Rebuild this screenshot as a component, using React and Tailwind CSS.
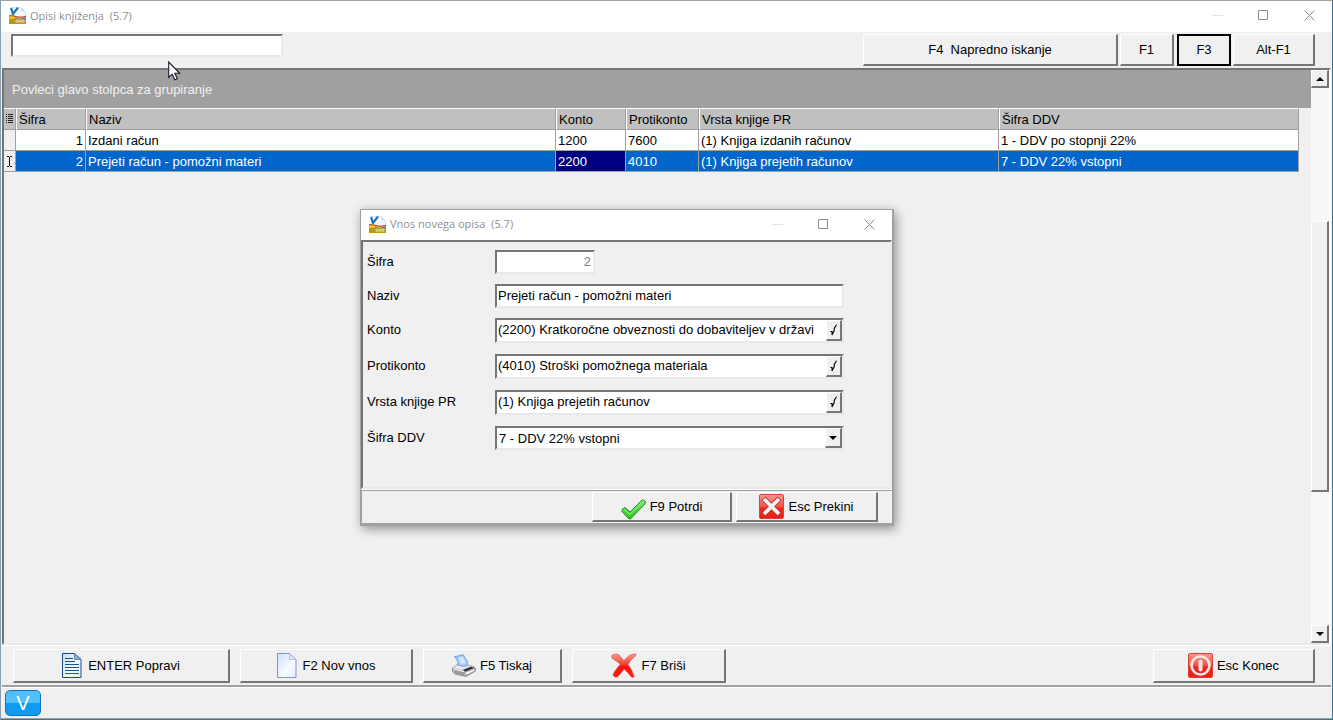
import React from "react";

const raised =
  "border border-r-2 border-b-2 border-t-white border-l-white border-r-[#767676] border-b-[#767676] bg-[#f0f0f0]";
const sunken =
  "border-2 border-t-[#757575] border-l-[#757575] border-r-[#e9e9e9] border-b-[#e9e9e9] bg-white";

function AppIcon() {
  return (
    <svg width="17" height="17" viewBox="0 0 17 17" aria-hidden="true">
      <path d="M3 0.5h9l4.500 4v9H3z" fill="#f4f7fb" stroke="#c9d3de" strokeWidth="0.6" />
      <path d="M12 0.500v4h4.500z" fill="#d4dce6" />
      <path d="M2 0.800L4 7L9 0.500" fill="none" stroke="#1778b8" strokeWidth="2.200" />
      <path d="M0 8C5 6.500 8 11.500 17 9V17H0z" fill="#f2c230" />
      <path d="M0 9C5 7.500 8 12 17 9.300" fill="none" stroke="#b33a55" strokeWidth="1" />
      <path d="M6 10.500C9 12.500 12 12 17 10.300V12H6z" fill="#3d78bb" />
      <path d="M0 12C5 11 9 12.500 17 12V17H0z" fill="#b59a12" />
      <path d="M7 13.200h2v2h-2zM10 13.200h2v2h-2zM13 13.200h2v2h-2z" fill="none" stroke="#f7f0c0" strokeWidth="0.7" />
    </svg>
  );
}

function WindowControls({ label }) {
  const base = "flex h-6 w-[46px] items-center justify-center text-[#8d8d8d]";
  return (
    <div className="flex shrink-0">
      <button type="button" aria-label={"Minimize " + label} className={base}>
        <svg width="11" height="11" viewBox="0 0 11 11"><path d="M0 5.500h11" stroke="#e2e2e2" /></svg>
      </button>
      <button type="button" aria-label={"Maximize " + label} className={base}>
        <svg width="11" height="11" viewBox="0 0 11 11"><path d="M0.500 0.500h9v9h-9z" fill="none" stroke="currentColor" /></svg>
      </button>
      <button type="button" aria-label={"Close " + label} className={base}>
        <svg width="11" height="11" viewBox="0 0 11 11"><path d="M0.500 0.500l10 10M10.500 0.500l-10 10" fill="none" stroke="currentColor" /></svg>
      </button>
    </div>
  );
}

function TitleBar({ title, className }) {
  return (
    <header className={"flex shrink-0 items-center bg-white pb-0.5 pl-2 " + className}>
      <AppIcon />
      <h2 className="ml-1 flex-1 whitespace-pre font-['Open_Sans','Noto_Sans',sans-serif] text-[11px] text-[#8f8f8f]">{title}</h2>
      <WindowControls label={title} />
    </header>
  );
}

function SheetIcon({ lined }) {
  return (
    <svg width="20" height="25" viewBox="0 0 20 25" aria-hidden="true">
      <defs>
        <linearGradient id={lined ? "sheetA" : "sheetB"} x1="0" y1="0" x2="1" y2="1">
          <stop offset="0" stopColor={lined ? "#c3dcf2" : "#cfdefa"} />
          <stop offset="0.600" stopColor="#f8fbff" />
          <stop offset="1" stopColor={lined ? "#dcebf8" : "#e2ebff"} />
        </linearGradient>
      </defs>
      <path
        d="M0.500 0.500H12.500L19 6.500V24.500H0.500z"
        fill={lined ? "url(#sheetA)" : "url(#sheetB)"}
        stroke={lined ? "#1d4a78" : "#8194c8"}
      />
      <path d="M12.500 0.700V6.500H19z" fill={lined ? "#8fb2d2" : "#dce6fb"} stroke={lined ? "#4a7098" : "#a3b3dc"} strokeWidth="0.700" />
      {lined && (
        <path d="M3 5.500h8M3 8.500h10M3 11.500h14M3 14.500h14M3 17.500h14M3 20.500h14" stroke="#1f518a" />
      )}
    </svg>
  );
}

function PrinterIcon() {
  return (
    <svg width="24" height="24" viewBox="0 0 24 24" aria-hidden="true">
      <path d="M0.500 14L7 9.500L21.500 12.500L23.500 14.500V17L14 22.500L3 20L0.500 17.500z" fill="#b4b4b6" stroke="#717174" strokeWidth="0.700" />
      <path d="M1 13.800L8 9.500L21.500 12.700L13 16.500z" fill="#ececee" />
      <path d="M5.500 11C7 8 4 5 2.500 2.500C6 3 8 0.500 11.500 0.800C12.500 4 16.500 6.500 15.500 11.500L12 12.500z" fill="#a6ccfb" stroke="#5f93da" strokeWidth="0.800" />
      <path d="M6.500 4C8 3.500 9 2.800 10.500 2.800C11.500 5 13.500 7 13.500 9.500L8.500 9.500C8.500 7.500 7.500 6 6.500 4z" fill="#d7e9ff" />
      <path d="M10.500 16L19 12.500L22 14L13.500 17.500z" fill="#36363a" />
      <path d="M2 15.500L12 18.200V21.500L3 19.200z" fill="#9b9b9e" />
      <path d="M12.500 18.700L22 14.800L23.300 16.700L14.500 21z" fill="#f8f8f8" stroke="#85858a" strokeWidth="0.600" />
      <path d="M1.500 15L12 17.600" stroke="#fafafa" strokeWidth="1" />
    </svg>
  );
}

function DeleteIcon() {
  return (
    <svg width="26" height="25" viewBox="0 0 26 25" aria-hidden="true">
      <defs>
        <linearGradient id="del" x1="0" y1="0" x2="0" y2="1">
          <stop offset="0" stopColor="#ff9a90" />
          <stop offset="0.400" stopColor="#f4483c" />
          <stop offset="0.550" stopColor="#fb1208" />
          <stop offset="1" stopColor="#ff2014" />
        </linearGradient>
      </defs>
      <path
        d="M1.500 2C4 0.800 7 0.800 8.500 2.500L13 8C15.500 4.500 19 1 25 1C25 2.500 24 3.500 22.500 4.500C20 6.500 18.500 9 17 11.500C19.500 15 22 19 23 24C22 24.800 20.500 24.500 19.500 23C17.500 20.500 15.500 18 13.300 16C10.500 18.500 9 22 6.500 23.800C4.500 24.600 2.500 23.500 2 22C3.500 18 6.500 14.500 9.200 11.500C7 8.500 4 7.500 1.500 5.500C0.500 4.500 0.500 2.800 1.500 2z"
        fill="url(#del)"
        stroke="#e0463d"
        strokeWidth="0.700"
      />
    </svg>
  );
}

function RedTile({ kind }) {
  return (
    <svg width="25" height="25" viewBox="0 0 25 25" aria-hidden="true">
      <defs>
        <linearGradient id={"tile-" + kind} x1="0" y1="0" x2="0" y2="1">
          <stop offset="0" stopColor="#f99a90" />
          <stop offset="0.500" stopColor="#ef5449" />
          <stop offset="0.550" stopColor="#ea2b22" />
          <stop offset="1" stopColor="#f01c14" />
        </linearGradient>
      </defs>
      <rect x="0.500" y="0.500" width="24" height="24" rx="1.500" fill={"url(#tile-" + kind + ")"} stroke="#dd4038" />
      {kind === "close" ? (
        <g>
          <path d="M4.500 4.500L20.500 20.500M20.500 4.500L4.500 20.500" stroke="#c0302a" strokeWidth="5.400" />
          <path d="M5 5L20 20M20 5L5 20" stroke="#f6f3f3" strokeWidth="3.800" />
        </g>
      ) : (
        <g fill="none" stroke="#f6e6e5">
          <circle cx="12.500" cy="12.500" r="9" strokeWidth="2.600" />
          <path d="M12.500 8.500V16.500" strokeWidth="4" strokeLinecap="round" />
        </g>
      )}
    </svg>
  );
}

function CheckIcon() {
  return (
    <svg width="25" height="22" viewBox="0 0 25 22" aria-hidden="true" className="mt-1">
      <defs>
        <linearGradient id="chk" x1="0" y1="0" x2="0" y2="1">
          <stop offset="0" stopColor="#7be86a" />
          <stop offset="1" stopColor="#22c41c" />
        </linearGradient>
      </defs>
      <path d="M1 11.500L4 9.500L9 14L21.500 1.500L24.500 3.500L24 6L9.500 21L7.500 20.500L1 13.500z" fill="url(#chk)" stroke="#269522" strokeWidth="1" strokeLinejoin="round" />
      <path d="M3 11.500L9 16.500L22.500 3" fill="none" stroke="#a8f59a" strokeWidth="1" />
    </svg>
  );
}

function CommandButton({ icon, children, className }) {
  return (
    <button type="button" className={"flex items-center justify-center whitespace-pre " + raised + " " + className}>
      {icon}
      <span>{children}</span>
    </button>
  );
}

const columns = [
  { name: "Šifra", width: "w-[70px]" },
  { name: "Naziv", width: "" },
  { name: "Konto", width: "w-[70px]" },
  { name: "Protikonto", width: "w-[73px]" },
  { name: "Vrsta knjige PR", width: "w-[300px]" },
  { name: "Šifra DDV", width: "w-[300px]" },
];

const rows = [
  ["1", "Izdani račun", "1200", "7600", "(1) Knjiga izdanih računov", "1 - DDV po stopnji 22%"],
  ["2", "Prejeti račun - pomožni materi", "2200", "4010", "(1) Knjiga prejetih računov", "7 - DDV 22% vstopni"],
];

function Grid() {
  return (
    <table className="w-full table-fixed border-separate border-spacing-0 text-left">
      <thead>
        <tr className="h-[22px] bg-[#c0c0c0]">
          <th aria-label="Izbor" className="w-3 border-r border-b border-t border-r-[#a0a0a0] border-b-[#a0a0a0] border-t-white p-0">
            <svg width="9" height="10" viewBox="0 0 9 10" className="ml-0.5">
              <path d="M0 0.500h1M0 2.500h1M0 4.500h1M0 6.500h1M0 8.500h1M2 0.500h5M2 2.500h5M2 4.500h5M2 6.500h5M2 8.500h5" stroke="#222" />
            </svg>
          </th>
          {columns.map((c) => (
            <th key={c.name} className={"border border-t-white border-l-white border-r-[#a0a0a0] border-b-[#a0a0a0] px-0.5 pt-0.5 pb-0 font-normal " + c.width}>
              {c.name}
            </th>
          ))}
        </tr>
      </thead>
      <tbody>
        {rows.map((r, i) => (
          <tr key={r[0]} className={i === 1 ? "h-[21px] bg-[#0066cc] text-white" : "h-[21px] bg-white"}>
            <td className="border-r border-b border-[#a0a0a0] bg-[#f0f0f0] p-0">
              {i === 1 && (
                <svg width="7" height="11" viewBox="0 0 7 11" className="ml-0.5">
                  <path d="M1 0.500h2M4 0.500h2M3.500 1v9M1 10.500h2M4 10.500h2" fill="none" stroke="#111" />
                </svg>
              )}
            </td>
            {r.map((v, j) => (
              <td
                key={columns[j].name}
                className={
                  "truncate border-r border-b border-[#a0a0a0] px-0.5 pt-0.5 pb-0 " +
                  (j === 0 ? "text-right " : "") +
                  (i === 1 && j === 2 ? "bg-[#000080]" : "")
                }
              >
                {v}
              </td>
            ))}
          </tr>
        ))}
      </tbody>
    </table>
  );
}

function ScrollBar() {
  const arrow = "flex h-[18px] w-full shrink-0 items-center justify-center " + raised;
  return (
    <div className="flex w-[18px] shrink-0 flex-col bg-[#f8f8f8]">
      <button type="button" aria-label="Gor" className={arrow}>
        <svg width="8" height="4" viewBox="0 0 8 4"><path d="M0 4L4 0L8 4z" /></svg>
      </button>
      <div className="flex flex-1 flex-col">
        <div className="flex-[134]" />
        <div className={"flex-[270] " + raised} />
        <div className="flex-[134]" />
      </div>
      <button type="button" aria-label="Dol" className={arrow}>
        <svg width="8" height="4" viewBox="0 0 8 4"><path d="M0 0L4 4L8 0z" /></svg>
      </button>
    </div>
  );
}

function LookupField({ id, label, value }) {
  return (
    <div className="flex h-9 items-start">
      <label htmlFor={id} className="w-32 shrink-0 pt-1">{label}</label>
      <div className={"flex h-[25px] flex-1 " + sunken}>
        <input id={id} defaultValue={value} className="min-w-0 flex-1 bg-white pb-0.5 pl-px outline-none" />
        <button type="button" aria-label={"Izberi: " + label} className={"flex w-4 items-center justify-center " + raised}>
          <svg width="8" height="12" viewBox="0 0 8 12"><path d="M0.500 7.500H2V11L4.200 6.500V4.500L6.500 0.800" fill="none" stroke="#000" strokeWidth="1.100" /></svg>
        </button>
      </div>
    </div>
  );
}

function Dialog() {
  return (
    <section
      role="dialog"
      aria-label="Vnos novega opisa"
      className="absolute top-[208px] left-[359px] flex w-[534px] flex-col border border-r-2 border-[#a0a0a0] bg-white shadow-[2px_3px_10px_rgba(0,0,0,0.4)]"
    >
      <TitleBar title="Vnos novega opisa  (5.7)" className="h-[30px]" />
      <div className="h-[249px] border-2 border-t-[#757575] border-l-[#757575] border-r-[#e9e9e9] border-b-[#e9e9e9] bg-[#f0f0f0] pt-2 pr-[46px] pl-1">
        <div className="flex h-[34px] items-start">
          <label htmlFor="sifra" className="w-32 shrink-0 pt-1">Šifra</label>
          <input id="sifra" disabled defaultValue="2" className={"h-6 w-[100px] pr-0.5 pb-0.5 text-right text-[#808080] " + sunken} />
        </div>
        <div className="flex h-[34px] items-start">
          <label htmlFor="naziv" className="w-32 shrink-0 pt-1">Naziv</label>
          <input id="naziv" defaultValue="Prejeti račun - pomožni materi" className={"h-6 min-w-0 flex-1 pb-0.5 pl-px outline-none " + sunken} />
        </div>
        <LookupField id="konto" label="Konto" value="(2200) Kratkoročne obveznosti do dobaviteljev v državi" />
        <LookupField id="protikonto" label="Protikonto" value="(4010) Stroški pomožnega materiala" />
        <LookupField id="vrsta" label="Vrsta knjige PR" value="(1) Knjiga prejetih računov" />
        <div className="flex items-start">
          <label htmlFor="ddv" className="w-32 shrink-0 pt-1">Šifra DDV</label>
          <div className={"relative flex h-6 flex-1 " + sunken}>
            <select id="ddv" className="min-w-0 flex-1 appearance-none bg-white pt-px pl-0.5 outline-none">
              <option>7 - DDV 22% vstopni</option>
            </select>
            <span className={"pointer-events-none absolute inset-y-0 right-0 flex w-[17px] items-center justify-center " + raised}>
              <svg width="8" height="4" viewBox="0 0 8 4"><path d="M0 0L4 4L8 0z" /></svg>
            </span>
          </div>
        </div>
      </div>
      <footer className="mt-px flex h-[35px] justify-end gap-1 border-t border-b-2 border-l border-[#a0a0a0] bg-[#f0f0f0] pt-px pr-3.5">
        <CommandButton icon={<CheckIcon />} className="h-[30px] w-[140px] gap-1">F9 Potrdi</CommandButton>
        <CommandButton icon={<RedTile kind="close" />} className="h-[30px] w-[142px] gap-1">Esc Prekini</CommandButton>
      </footer>
    </section>
  );
}

export default function App() {
  return (
    <main className="relative flex h-screen min-h-[640px] flex-col border border-t-[#a0a0a0] border-r-[#3f7296] border-b-[#3f7296] border-l-[#8d9fac] bg-[#f0f0f0] font-['Liberation_Sans',Arial,sans-serif] text-[13px] leading-4 text-black">
      <TitleBar title="Opisi knjiženja  (5.7)" className="h-[31px]" />

      <div className="flex h-9 shrink-0 items-start pt-0.5 pr-[17px] pl-2.5">
        <input aria-label="Iskanje" className={"h-[23px] w-[272px] outline-none " + sunken} />
        <div className="ml-auto flex gap-0.5">
          <CommandButton className="h-8 w-[255px]">F4  Napredno iskanje</CommandButton>
          <CommandButton className="h-8 w-[54px]">F1</CommandButton>
          <button type="button" className="ml-px h-8 w-[54px] border-2 border-black">F3</button>
          <CommandButton className="h-8 w-[82px]">Alt-F1</CommandButton>
        </div>
      </div>

      <div className="mx-px flex min-h-0 flex-1 border-2 border-t-[#757575] border-l-[#757575] border-r-white border-b-[#e9e9e9] bg-[#f0f0f0]">
        <div className="min-w-0 flex-1">
          <p className="flex h-[38px] items-center bg-[#a0a0a0] pt-0.5 pl-2 text-[#f0f0f0]">Povleci glavo stolpca za grupiranje</p>
          <div className="pr-3">
            <Grid />
          </div>
        </div>
        <ScrollBar />
      </div>

      <nav aria-label="Ukazi" className="mx-px flex h-[42px] shrink-0 items-start gap-2.5 border-t border-t-white border-b-2 border-b-[#a0a0a0] pt-[3px] pr-4 pl-[11px]">
        <CommandButton icon={<SheetIcon lined />} className="h-[34px] w-[217px] gap-1.5">ENTER Popravi</CommandButton>
        <CommandButton icon={<SheetIcon />} className="h-[34px] w-[173px] gap-1.5">F2 Nov vnos</CommandButton>
        <CommandButton icon={<PrinterIcon />} className="h-[34px] w-[139px] gap-1">F5 Tiskaj</CommandButton>
        <CommandButton icon={<DeleteIcon />} className="h-[34px] w-[154px] gap-1">F7 Briši</CommandButton>
        <CommandButton icon={<RedTile kind="power" />} className="ml-auto h-[34px] w-[162px] gap-1">Esc Konec</CommandButton>
      </nav>

      <footer className="flex h-8 shrink-0 items-center border-t border-b border-t-white border-b-[#a0a0a0] pl-1">
        <button type="button" className="h-[26px] w-9 rounded-[5px] border border-[#0b74c4] bg-linear-to-b from-[#4fc0fb] from-50% to-[#109bee] to-50% text-xl leading-6 text-white">V</button>
      </footer>

      <Dialog />

      <svg width="13" height="20" viewBox="0 0 13 20" className="pointer-events-none absolute top-[60px] left-[167px]" aria-hidden="true">
        <path d="M0.700 1V16.500L4.200 13.200L6.800 18.800L9.300 17.700L6.800 12.300H11.700z" fill="#fff" stroke="#1a1a2a" strokeWidth="1.100" />
      </svg>
    </main>
  );
}
